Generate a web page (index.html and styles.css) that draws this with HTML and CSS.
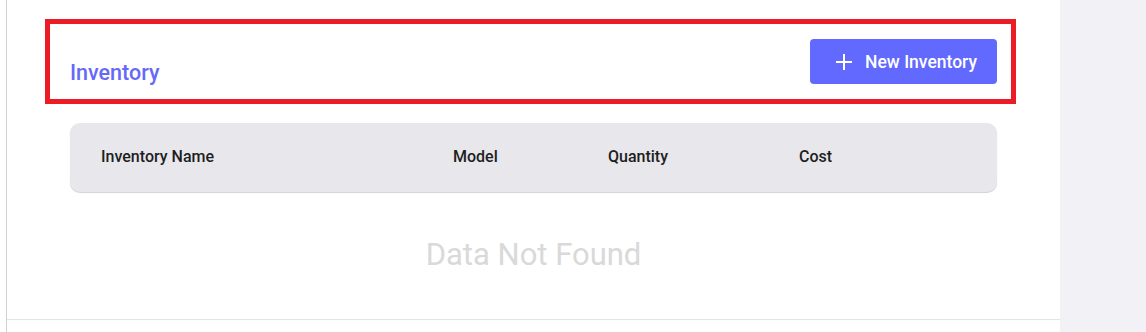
FILE: index.html
```html
<!DOCTYPE html>
<html lang="en">
<head>
<meta charset="utf-8">
<title>Inventory</title>
<link rel="stylesheet" href="styles.css">
</head>
<body>
<div class="layout">
  <main class="main">
    <div class="content">
      <section class="card">
        <div class="toolbar">
          <h2 class="title">Inventory</h2>
          <button class="btn-new" type="button">
            <svg class="plus" width="18" height="18" viewBox="0 0 18 18" aria-hidden="true">
              <path d="M9 1v16M1 9h16" stroke="#fff" stroke-width="2" fill="none"/>
            </svg>
            <span>New Inventory</span>
          </button>
        </div>
        <div class="table">
          <div class="thead">
            <div class="th">Inventory Name</div>
            <div class="th">Model</div>
            <div class="th">Quantity</div>
            <div class="th">Cost</div>
          </div>
          <div class="empty">Data Not Found</div>
        </div>
      </section>
    </div>
  </main>
  <aside class="side"></aside>
</div>
</body>
</html>
```

FILE: styles.css
```css
* { box-sizing: border-box; }
html, body { margin: 0; padding: 0; background: #fff; }
body { font-family: Roboto, "Noto Sans", "Liberation Sans", sans-serif; }

.layout {
  display: flex;
  height: 332px;
}
.main {
  flex: 1;
  padding-left: 6px;
  background: #fff;
}
.content {
  height: 100%;
  border-left: 1px solid #d0d0d0;
}
.card {
  height: 320px;
  border-bottom: 1px solid #e4e4e4;
  padding-top: 19px;
}
.side {
  width: 86px;
  background: #f1f1f6;
}

.toolbar {
  margin-left: 38px;
  width: 971px;
  height: 85px;
  border: 5px solid #ed1c24;
  padding: 15px 14px 15px 20px;
  display: flex;
  justify-content: space-between;
  align-items: flex-end;
}
.title {
  margin: 0 0 -1px 0;
  font-size: 21.5px;
  line-height: 25px;
  font-weight: 500;
  color: #6669f8;
}
.btn-new {
  height: 45px;
  width: 187px;
  border: none;
  border-radius: 4px;
  background: #6169fe;
  color: #fff;
  font-family: inherit;
  font-size: 17.5px;
  font-weight: 500;
  display: flex;
  align-items: center;
  padding: 0 0 0 25px;
  gap: 12px;
  cursor: pointer;
}
.plus { display: block; }

.table {
  margin: 19px 0 0 63px;
  width: 927px;
}
.thead {
  height: 69px;
  background: #e7e7ec;
  border-radius: 10px;
  box-shadow: 0 1px 1px rgba(0, 0, 0, 0.18);
  display: grid;
  grid-template-columns: 352px 155px 191px 1fr;
  align-items: center;
  padding: 0 0 3px 31px;
}
.th {
  font-size: 16px;
  font-weight: 500;
  color: #1e1e1e;
}
.empty {
  padding-top: 45px;
  text-align: center;
  font-size: 31px;
  line-height: 36px;
  color: #d9d9d9;
}
```
